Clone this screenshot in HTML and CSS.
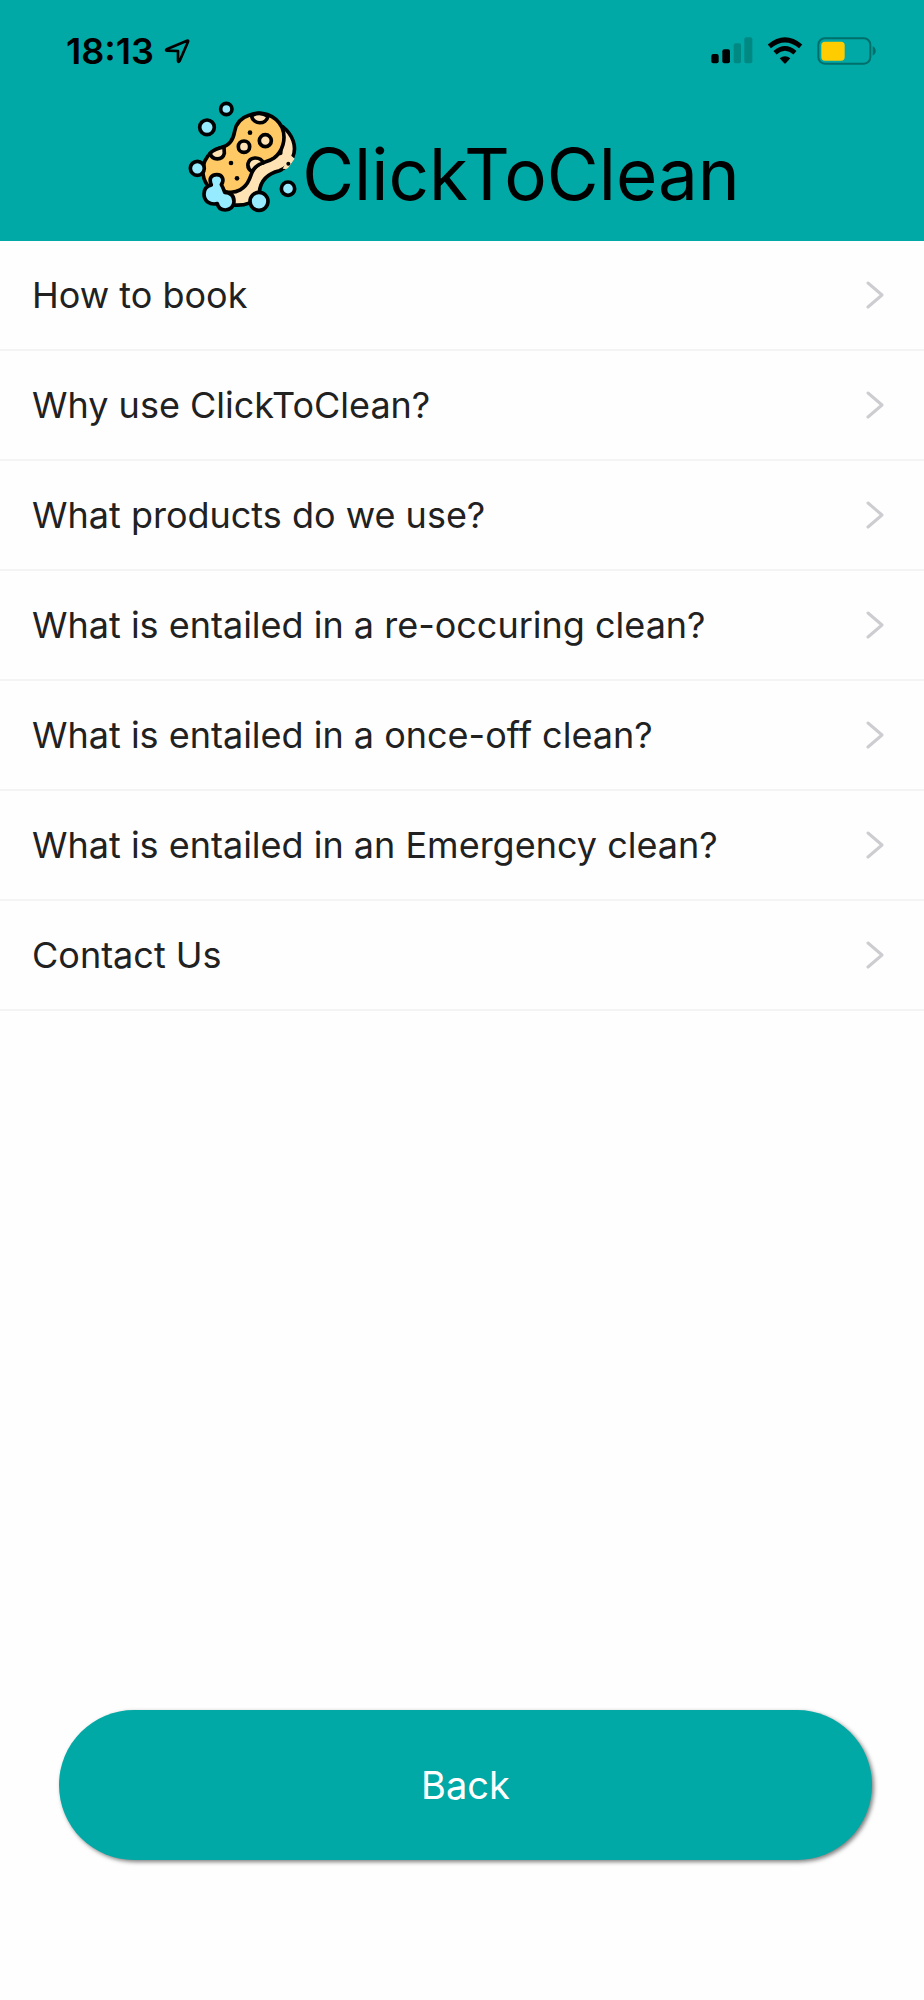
FILE: index.html
```html
<!DOCTYPE html>
<html lang="en">
<head>
<meta charset="utf-8">
<meta name="viewport" content="width=device-width, initial-scale=1">
<title>ClickToClean</title>
<link rel="stylesheet" href="styles.css">
</head>
<body>
<div class="app">
  <header class="header">
    <div class="status">
      <div class="status-left">
        <span class="time">18:13</span>
        <svg class="location" width="26" height="26" viewBox="0 0 78 78" aria-hidden="true">
          <path d="M8 34 69 8Q74 6 72 11L47 69Q43 74 42 69V39L9 38Q4 37 8 34Z" fill="none" stroke="#000" stroke-width="8" stroke-linejoin="round"/>
        </svg>
      </div>
      <div class="status-right">
        <svg width="42" height="27" viewBox="0 0 126 81" aria-hidden="true">
          <rect x="1" y="51" width="22" height="28" rx="6"/>
          <rect x="34" y="37" width="23" height="42" rx="6"/>
          <rect x="68" y="19" width="22" height="60" rx="6" fill="#008883"/>
          <rect x="100" y="1" width="24" height="78" rx="6" fill="#008883"/>
        </svg>
        <svg width="36" height="27" viewBox="0 0 108 81" aria-hidden="true">
          <path d="M7 28Q54-11 101 28" fill="none" stroke="#000" stroke-width="15"/>
          <path d="M24 47Q54 21 84 47" fill="none" stroke="#000" stroke-width="14"/>
          <path d="M38 64Q54 52 70 64L57 78Q54 81 51 78Z"/>
        </svg>
        <svg width="60" height="28" viewBox="0 0 180 84" aria-hidden="true">
          <rect x="4" y="4" width="156" height="76" rx="19" fill="none" stroke="#006f6b" stroke-width="6"/>
          <rect x="13" y="14" width="70" height="57" rx="11" fill="#ffcc00"/>
          <path d="M167 28Q176 32 176 42T167 56Z" fill="#006f6b"/>
        </svg>
      </div>
    </div>
    <div class="logo">
      <svg class="sponge" width="110" height="118" viewBox="22 24 330 354" aria-hidden="true">
        <g stroke="#000" stroke-width="11" stroke-linejoin="round" stroke-linecap="round">
          <path d="M306 110C336 134 350 170 336 202C328 224 312 236 296 242C262 250 240 268 236 306C226 340 190 348 158 345L130 310L220 210L300 190Z" fill="#ffe3b5"/>
          <path d="M205 76C240 60 284 74 304 112C318 146 306 184 280 204C266 214 250 215 238 222C214 236 214 250 206 268C194 296 168 312 136 305L84 290C66 270 62 240 72 214C82 192 100 178 124 172C148 166 158 150 162 124C166 102 180 84 205 76Z" fill="#ffca66"/>
          <path d="M212 77C218 105 256 105 262 79C246 68 228 68 212 77Z" fill="#ffe3b5"/>
          <path d="M88 190C94 212 126 212 131 190L130 171C112 174 98 180 88 190Z" fill="#ffe3b5"/>
          <path d="M214 245C194 232 200 206 222 204C236 203 245 210 247 219C230 222 222 232 214 245Z" fill="#ffe3b5"/>
          <circle cx="190" cy="170" r="17" fill="#ffe3b5"/>
          <circle cx="254" cy="152" r="18" fill="#ffe3b5"/>
          <path d="M92 285C82 262 96 254 108 254C126 254 132 270 122 284C128 294 130 302 132 307C150 308 160 318 160 334C160 350 148 360 134 360C120 360 112 352 110 341C86 346 70 332 70 312C70 298 78 288 92 285Z" fill="#97ebff"/>
          <circle cx="137" cy="57" r="17" fill="#97ebff"/>
          <circle cx="79" cy="112" r="22" fill="#97ebff"/>
          <circle cx="50" cy="235" r="21" fill="#97ebff"/>
          <circle cx="235" cy="334" r="27" fill="#97ebff"/>
          <circle cx="322" cy="296" r="20" fill="#97ebff"/>
        </g>
        <path d="M330 196 318 212 306 236 322 238 342 206Z" fill="#ffe3b5"/>
        <path d="M344 204 354 208 328 246 304 244 322 234Z" fill="#00a9a5"/>
        <circle cx="323" cy="221" r="6"/>
        <circle cx="208" cy="128" r="7"/>
        <circle cx="151" cy="219" r="7"/>
        <circle cx="169" cy="265" r="7"/>
      </svg>
      <h1 class="wordmark">ClickToClean</h1>
    </div>
  </header>
  <main class="main">
    <nav class="menu" aria-label="Help topics">
      <a class="item" href="#book">How to book<svg class="chevron" viewBox="0 0 18 28" aria-hidden="true"><path d="M2 2 16 14 2 26"/></svg></a>
      <a class="item" href="#why">Why use ClickToClean?<svg class="chevron" viewBox="0 0 18 28" aria-hidden="true"><path d="M2 2 16 14 2 26"/></svg></a>
      <a class="item" href="#products">What products do we use?<svg class="chevron" viewBox="0 0 18 28" aria-hidden="true"><path d="M2 2 16 14 2 26"/></svg></a>
      <a class="item" href="#recurring">What is entailed in a re-occuring clean?<svg class="chevron" viewBox="0 0 18 28" aria-hidden="true"><path d="M2 2 16 14 2 26"/></svg></a>
      <a class="item" href="#once-off">What is entailed in a once-off clean?<svg class="chevron" viewBox="0 0 18 28" aria-hidden="true"><path d="M2 2 16 14 2 26"/></svg></a>
      <a class="item" href="#emergency">What is entailed in an Emergency clean?<svg class="chevron" viewBox="0 0 18 28" aria-hidden="true"><path d="M2 2 16 14 2 26"/></svg></a>
      <a class="item" href="#contact">Contact Us<svg class="chevron" viewBox="0 0 18 28" aria-hidden="true"><path d="M2 2 16 14 2 26"/></svg></a>
    </nav>
    <div class="actions">
      <button class="back" type="button">Back</button>
    </div>
  </main>
</div>
</body>
</html>
```
FILE: styles.css
```css
* {
  box-sizing: border-box;
}

body {
  margin: 0;
  background: #fefefe;
  color: #212121;
  font-family: Inter, "Liberation Sans", sans-serif;
}

.app {
  display: flex;
  flex-direction: column;
  min-height: 100vh;
}

.header {
  padding-bottom: 25px;
  background: #00a9a5;
  color: #000;
}

.status {
  display: flex;
  align-items: center;
  justify-content: space-between;
  height: 98px;
  padding: 3px 47px 0 66px;
}

.status-left,
.status-right {
  display: flex;
  align-items: center;
}

.status-left {
  gap: 10px;
}

.status-right {
  gap: 14px;
}

.time {
  font-size: 36px;
  font-weight: 600;
  line-height: 40px;
}

.logo {
  display: flex;
  align-items: center;
  justify-content: center;
  gap: 4px;
  padding-left: 4px;
}

.sponge {
  flex: none;
}

.wordmark {
  margin: 0;
  padding-top: 34px;
  font-size: 71px;
  font-weight: 400;
  line-height: 80px;
}

.main {
  display: flex;
  flex: 1;
  flex-direction: column;
  justify-content: space-between;
}

.menu {
  display: flex;
  flex-direction: column;
}

.item {
  display: flex;
  align-items: center;
  justify-content: space-between;
  min-height: 110px;
  padding: 0 40px 0 32px;
  border-bottom: 2px solid #f4f4f4;
  color: inherit;
  font-size: 36px;
  line-height: 44px;
  text-decoration: none;
}

.chevron {
  flex: none;
  width: 18px;
  height: 28px;
  fill: none;
  stroke: #cdcdd1;
  stroke-width: 3;
  stroke-linecap: round;
  stroke-linejoin: round;
}

.actions {
  display: flex;
  padding: 40px 52px 140px 59px;
}

.back {
  flex: 1;
  height: 150px;
  border: 0;
  border-radius: 75px;
  background: #00a9a5;
  box-shadow: 2px 2px 4px rgba(0, 0, 0, 0.5);
  color: #fff;
  font-family: inherit;
  font-size: 38px;
}
```
